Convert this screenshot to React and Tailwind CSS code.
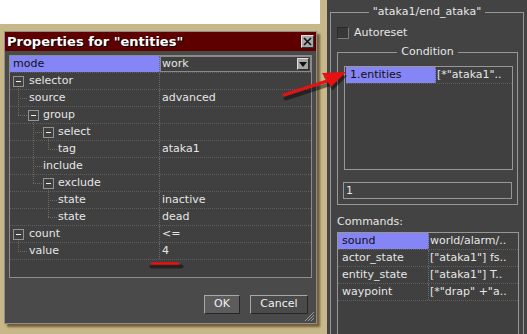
import React from 'react';

const props = [
  { name: 'mode', value: 'work', pad: 'pl-[3px]', sel: true },
  { name: 'selector', pad: 'pl-[19px]' },
  { name: 'source', value: 'advanced', pad: 'pl-[19px]' },
  { name: 'group', pad: 'pl-[33px]' },
  { name: 'select', pad: 'pl-[48px]' },
  { name: 'tag', value: 'ataka1', pad: 'pl-[48px]' },
  { name: 'include', pad: 'pl-[33px]' },
  { name: 'exclude', pad: 'pl-[48px]' },
  { name: 'state', value: 'inactive', pad: 'pl-[48px]' },
  { name: 'state', value: 'dead', pad: 'pl-[48px]' },
  { name: 'count', value: '<=', pad: 'pl-[19px]' },
  { name: 'value', value: '4', pad: 'pl-[19px]' },
];

const commands = [
  { name: 'sound', value: 'world/alarm/..', sel: true },
  { name: 'actor_state', value: '["ataka1"] fs..' },
  { name: 'entity_state', value: '["ataka1"] T..' },
  { name: 'waypoint', value: '[*"drap" +"a..' },
];

// tree guides, drawn in page coordinates
const boxes = [[13, 1], [28, 3], [43, 4], [43, 7], [13, 10]];
const vlines = [[18, 86, 115], [33, 120, 183], [48, 137, 149], [48, 188, 217], [18, 239, 251]];
const hlines = [[2, 18, 27], [3, 18, 28], [4, 33, 43], [5, 48, 57], [6, 33, 42], [7, 33, 43], [8, 48, 57], [9, 48, 57], [11, 18, 27]];
const mid = (i) => 56 + 17 * i + 8;

const TreeGuides = () => (
  <svg className="absolute top-0 left-0 pointer-events-none" width="150" height="204" viewBox="10 56 150 204">
    {vlines.map(([x, a, b], k) => (
      <line key={'v' + k} x1={x + 0.5} y1={a} x2={x + 0.5} y2={b} stroke="#736a5e" strokeDasharray="1 1" />
    ))}
    {hlines.map(([i, a, b], k) => (
      <line key={'h' + k} x1={a} y1={mid(i) + 0.5} x2={b} y2={mid(i) + 0.5} stroke="#736a5e" strokeDasharray="1 1" />
    ))}
    {boxes.map(([x, i], k) => {
      const y = 56 + 17 * i + 3;
      return (
        <g key={'b' + k}>
          <rect x={x + 0.5} y={y + 0.5} width="10" height="10" fill="#404040" stroke="#e8e8e8" strokeDasharray="1 1" />
          <line x1={x + 3} y1={y + 5.5} x2={x + 8} y2={y + 5.5} stroke="#f0f0f0" />
        </g>
      );
    })}
  </svg>
);

const Button = ({ children, w, focus }) => (
  <div
    className={`${w} h-[19px] flex items-center justify-center border border-t-[#a8a8a8] border-l-[#a8a8a8] border-b-[#262626] border-r-[#262626] text-[#f0f0f0] ${focus ? 'bg-[#5c5c5c]' : 'bg-[#4a4a4a]'}`}
  >
    {children}
  </div>
);

const PropertiesDialog = () => (
  <div className="relative ml-[4px] mt-[7px] w-[313px] h-[293px] flex flex-col border border-[#8e8e8e] bg-[#4a4a4a] shadow-[3px_3px_2px_rgba(80,60,25,0.7)]">
    <div className="h-[19px] bg-[#5e0000] flex items-center justify-between pl-[2px] pr-[2px]">
      <span className="font-bold text-[13px] leading-[19px] text-white [text-shadow:1px_1px_0_#000]">
        Properties for "entities"
      </span>
      <div className="w-[13px] h-[13px] bg-[#a9a9a9] border border-t-[#e0e0e0] border-l-[#e0e0e0] border-b-[#303030] border-r-[#303030] flex items-center justify-center">
        <svg width="9" height="9" viewBox="0 0 9 9">
          <path d="M1 1 L8 8 M8 1 L1 8" stroke="#111" strokeWidth="1.6" />
        </svg>
      </div>
    </div>

    <div className="px-[4px] pt-[4px] flex flex-col">
      <div className="h-[223px] border border-[#8c8c8c] bg-[#404040]">
        <div className="relative">
          {props.map((p, i) => (
            <div key={i} className="flex h-[17px] border-b border-dotted border-[#5e5e5e] leading-[16px]">
              <div
                className={`w-[150px] shrink-0 border-r border-dotted border-[#6a6a6a] ${p.pad} ${p.sel ? 'bg-[#8585f5] text-[#101010]' : 'text-[#e6e6e6]'}`}
              >
                {p.name}
              </div>
              {p.sel ? (
                <div className="flex-1 flex items-center justify-between border border-[#8a8a8a] pl-[1px] pr-[1px] text-[#e6e6e6] leading-[14px]">
                  <span>{p.value}</span>
                  <div className="w-[12px] h-[12px] bg-[#a6a6a6] border border-t-[#e0e0e0] border-l-[#e0e0e0] border-b-[#2c2c2c] border-r-[#2c2c2c] flex items-center justify-center">
                    <svg width="8" height="5" viewBox="0 0 8 5">
                      <path d="M0 0 H8 L4 5 Z" fill="#111" />
                    </svg>
                  </div>
                </div>
              ) : (
                <div className="flex-1 pl-[2px] text-[#e6e6e6]">{p.value}</div>
              )}
            </div>
          ))}
          <TreeGuides />
        </div>
      </div>
      <div className="mt-[17px] flex justify-end gap-[10px] pr-[4px]">
        <Button w="w-[36px]" focus>OK</Button>
        <Button w="w-[58px]">Cancel</Button>
      </div>
    </div>

    <svg className="absolute right-[1px] bottom-[1px]" width="12" height="12" viewBox="0 0 12 12">
      <path d="M11 2 L2 11 M11 5 L5 11 M11 8 L8 11" stroke="#9a9a9a" />
    </svg>
  </div>
);

const ListRow = ({ name, value, sel, nameW }) => (
  <div className="flex h-[17px] border-b border-dotted border-[#606060] leading-[16px]">
    <div className={`${nameW} shrink-0 pl-[4px] border-r border-dotted border-[#6a6a6a] ${sel ? 'bg-[#8585f5] text-[#101010]' : 'text-[#e6e6e6]'}`}>
      {name}
    </div>
    <div className="flex-1 pl-[1px] text-[#e6e6e6] whitespace-nowrap overflow-hidden">{value}</div>
  </div>
);

const TriggerPanel = () => (
  <div className="w-[200px] h-full bg-[#434343] overflow-hidden">
    <div className="ml-[3px] mt-[12px] w-[194px] h-[330px] border border-b-0 border-[#979797] flex flex-col">
      <div className="self-center -mt-[8px] px-[4px] bg-[#434343] leading-[14px] text-[#e6e6e6]">"ataka1/end_ataka"</div>

      <div className="mt-[8px] ml-[6px] flex items-center gap-[5px]">
        <div className="w-[12px] h-[12px] bg-[#383838] border border-t-[#2a2a2a] border-l-[#2a2a2a] border-b-[#7c7c7c] border-r-[#7c7c7c]" />
        <span className="leading-[12px] text-[#e6e6e6]">Autoreset</span>
      </div>

      <div className="mt-[13px] ml-[6px] w-[181px] h-[153px] border border-[#979797] flex flex-col">
        <div className="self-center -mt-[8px] px-[4px] bg-[#434343] leading-[14px] text-[#e6e6e6]">Condition</div>
        <div className="mt-[7px] ml-[6px] w-[169px] h-[104px] border border-[#979797] bg-[#404040] pl-[1px]">
          <ListRow name="1.entities" value={'[*"ataka1"..'} sel nameW="w-[90px]" />
        </div>
        <div className="mt-[12px] ml-[5px] w-[169px] h-[17px] border border-[#979797] pl-[2px] leading-[15px] text-[#e6e6e6]">1</div>
      </div>

      <div className="mt-[10px] ml-[6px] leading-[14px] text-[#e6e6e6]">Commands:</div>
      <div className="mt-[3px] ml-[6px] w-[182px] flex-1 border border-b-0 border-[#979797] bg-[#404040]">
        {commands.map((c, i) => (
          <ListRow key={i} {...c} nameW="w-[91px]" />
        ))}
      </div>
    </div>
  </div>
);

const Annotations = () => (
  <svg className="absolute inset-0 pointer-events-none" width="527" height="334" viewBox="0 0 527 334">
    <g opacity="0.45" transform="translate(1.5 2.5)">
      <line x1="284" y1="96" x2="330" y2="81" stroke="#000" strokeWidth="4" strokeLinecap="round" />
      <path d="M346 73 L322 74 L331 88 Z" fill="#000" />
      <line x1="150" y1="264" x2="180" y2="264" stroke="#000" strokeWidth="4" strokeLinecap="round" />
    </g>
    <line x1="284" y1="95" x2="330" y2="80" stroke="#e81010" strokeWidth="3" strokeLinecap="round" />
    <path d="M346 72 L322 73 L331 87 Z" fill="#e81010" />
    <line x1="151" y1="263.5" x2="179" y2="263.5" stroke="#e81010" strokeWidth="2.5" />
  </svg>
);

export default function App() {
  return (
    <div className="relative w-[527px] h-[334px] overflow-hidden flex bg-[#c7b789] font-['DejaVu_Sans',sans-serif] text-[11px]">
      <div className="w-[327px] h-full flex flex-col">
        <div className="w-[320px] h-[24px] bg-white" />
        <PropertiesDialog />
      </div>
      <TriggerPanel />
      <Annotations />
    </div>
  );
}
